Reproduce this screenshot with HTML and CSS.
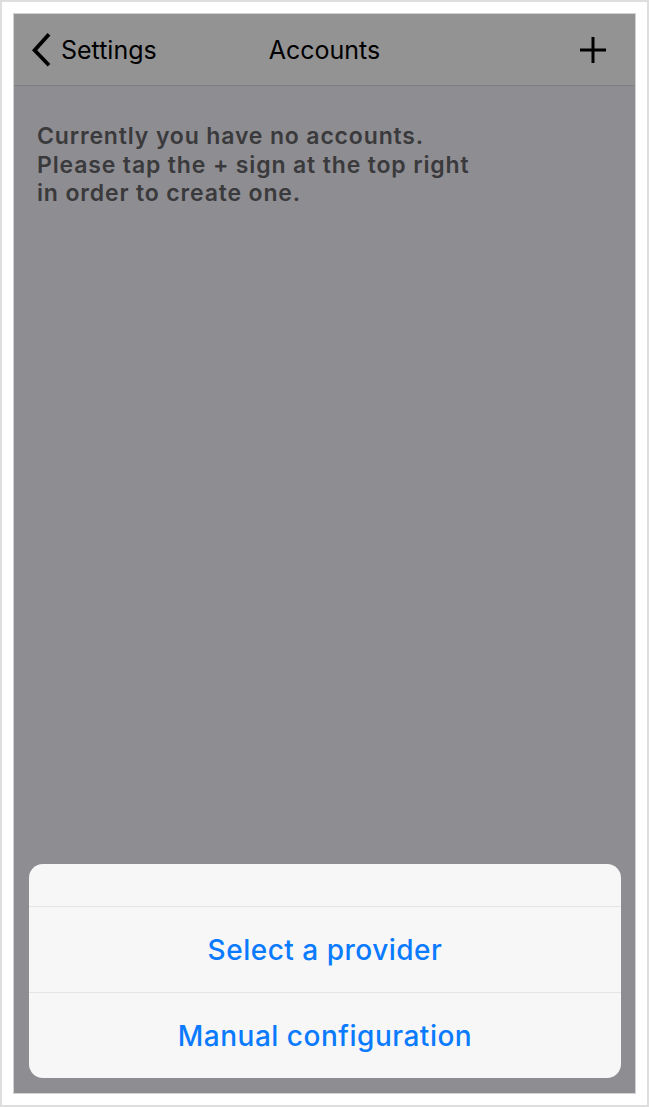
FILE: index.html
```html
<!DOCTYPE html>
<html lang="en">
<head>
<meta charset="utf-8">
<title>Accounts</title>
<link rel="stylesheet" href="styles.css">
</head>
<body>
<div class="frame">
  <div class="screen">
    <header class="nav">
      <div class="nav-left">
        <svg class="chevron" width="20" height="36" viewBox="0 0 20 36" aria-hidden="true">
          <path d="M17 2.3 L2.6 18.3 L17 33.3" fill="none" stroke="#000" stroke-width="3.8" stroke-linecap="butt" stroke-linejoin="miter"/>
        </svg>
        <span class="back-label">Settings</span>
      </div>
      <div class="nav-title">Accounts</div>
      <div class="nav-right">
        <svg class="plus" width="28" height="28" viewBox="0 0 28 28" aria-hidden="true">
          <path d="M14 1 V27 M1 14 H27" fill="none" stroke="#000" stroke-width="3"/>
        </svg>
      </div>
    </header>
    <main class="content">
      <p class="empty">Currently you have no accounts.<br>Please tap the + sign at the top right<br>in order to create one.</p>
      <div class="sheet">
        <div class="sheet-head"></div>
        <div class="sheet-row">Select a provider</div>
        <div class="sheet-row">Manual configuration</div>
      </div>
    </main>
  </div>
</div>
</body>
</html>
```

FILE: styles.css
```css
* { box-sizing: border-box; }
html, body { margin: 0; padding: 0; background: #fff; }
body { font-family: Inter, "Liberation Sans", Arial, sans-serif; }

.frame {
  width: 649px;
  height: 1107px;
  border: 2px solid #dedede;
  padding: 11px;
}

.screen {
  width: 100%;
  height: 100%;
  border: 1px solid #d2d2d2;
  display: flex;
  flex-direction: column;
  background: #8e8d92;
}

.nav {
  height: 72px;
  flex: none;
  background: #939393;
  border-bottom: 1px solid #7f7f82;
  display: grid;
  grid-template-columns: 1fr auto 1fr;
  align-items: center;
  padding: 1px 18px 0 18px;
}

.nav-left { display: flex; align-items: center; gap: 9px; }
.chevron { display: block; }
.back-label { font-size: 25px; color: #000; }
.nav-title { font-size: 25px; color: #000; }
.nav-right { display: flex; justify-content: flex-end; padding-right: 10px; }
.plus { display: block; }

.content {
  flex: 1;
  display: flex;
  flex-direction: column;
}

.empty {
  margin: 0;
  padding: 36px 0 0 23px;
  font-size: 23px;
  line-height: 28.5px;
  letter-spacing: 0.85px;
  font-weight: 600;
  color: #3a3a3c;
}

.sheet {
  margin: auto 14px 15px 15px;
  background: #f7f7f7;
  border-radius: 14px;
  overflow: hidden;
}

.sheet-head { height: 43px; border-bottom: 1px solid #e4e4e4; }
.sheet-row {
  height: 85px;
  display: flex;
  align-items: center;
  justify-content: center;
  font-size: 28px;
  letter-spacing: 0.5px;
  font-weight: 500;
  color: #0a7bff;
}
.sheet-row + .sheet-row { border-top: 1px solid #e4e4e4; height: 86px; }
```
